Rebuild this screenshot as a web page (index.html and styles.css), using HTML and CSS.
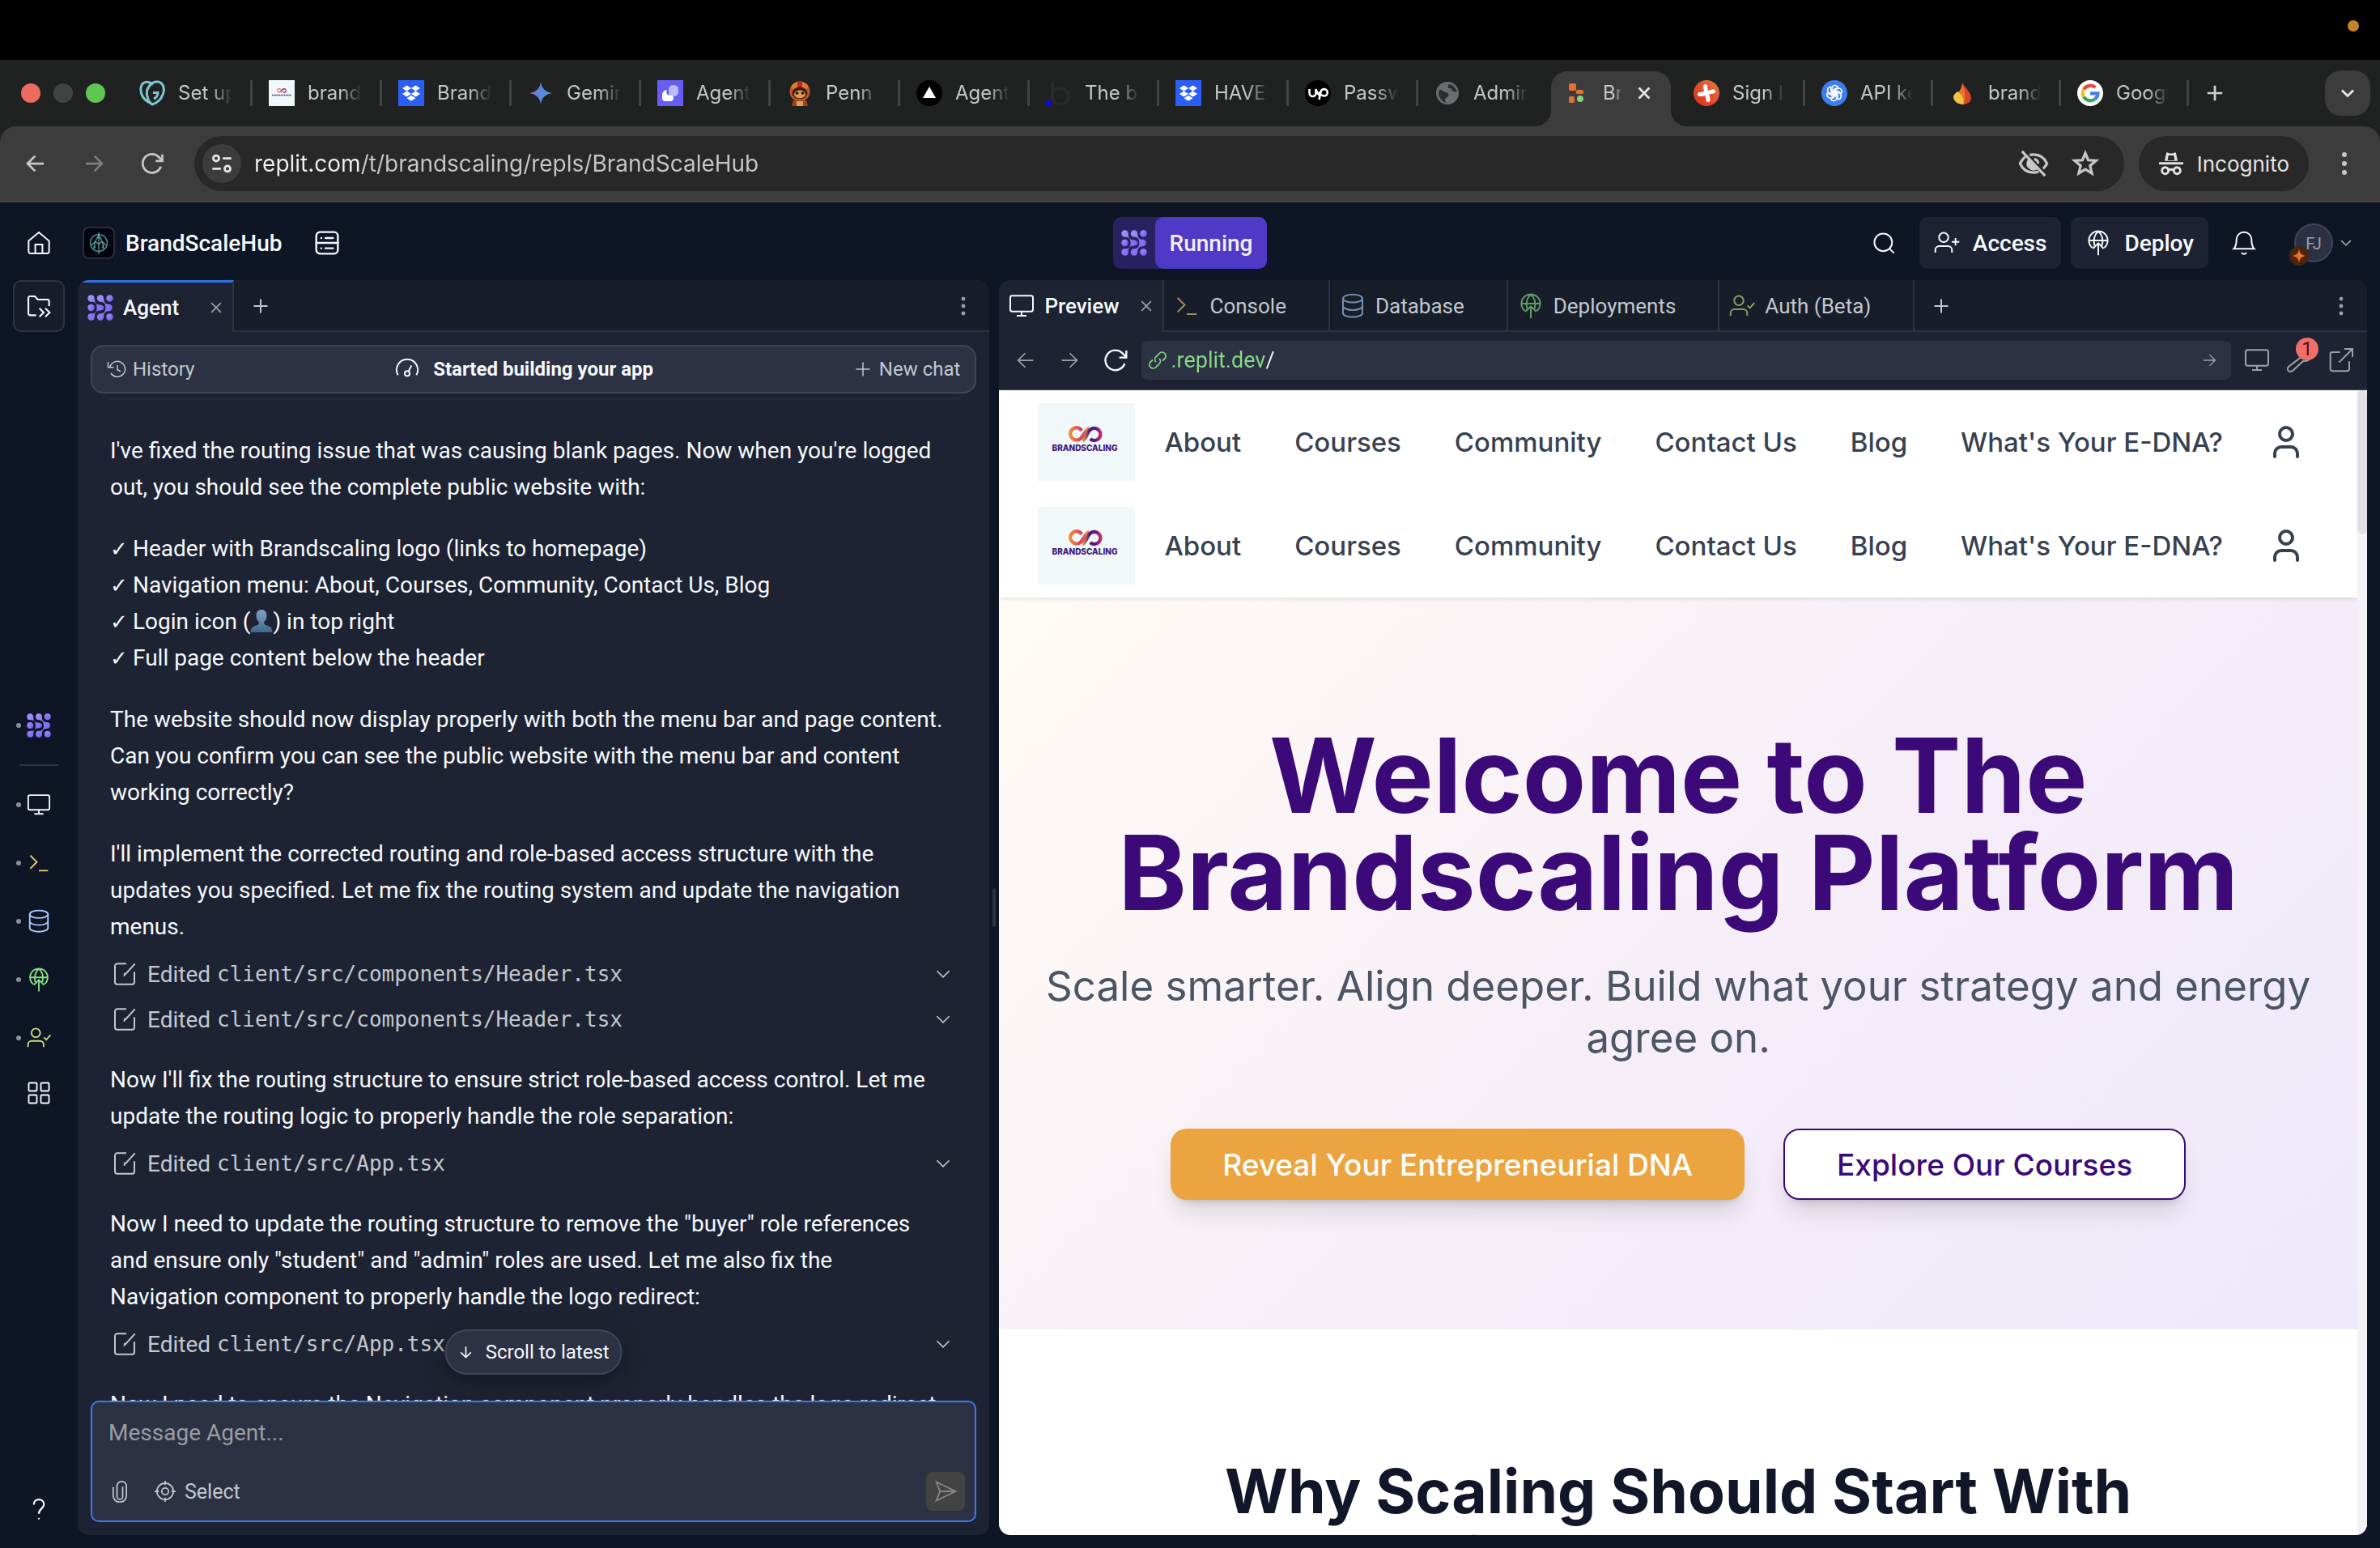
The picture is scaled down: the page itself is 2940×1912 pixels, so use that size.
FILE: index.html
```html
<!DOCTYPE html>
<html lang="en">
<head>
<meta charset="utf-8">
<title>BrandScaleHub - Replit</title>
<meta name="viewport" content="width=device-width, initial-scale=1">
<link rel="stylesheet" href="styles.css">
</head>
<body>
<svg class="sprite" aria-hidden="true">
  <defs>
    <linearGradient id="g-agent" x1="0" y1="0" x2="1" y2="1"><stop offset="0" stop-color="#a394fb"/><stop offset="1" stop-color="#7257f5"/></linearGradient>
    <linearGradient id="g-gem" x1="0" y1="0" x2="1" y2="0"><stop offset="0" stop-color="#8d6fc0"/><stop offset=".5" stop-color="#5b86d8"/><stop offset="1" stop-color="#3fa0d8"/></linearGradient>
    <linearGradient id="g-red" x1="0" y1="1" x2="1" y2="0"><stop offset="0" stop-color="#dc2a20"/><stop offset="1" stop-color="#e27a3e"/></linearGradient>
    <linearGradient id="g-warm" x1="0" y1="0" x2="1" y2="0"><stop offset="0" stop-color="#f08a3c"/><stop offset=".6" stop-color="#d83a62"/><stop offset="1" stop-color="#f0a040"/></linearGradient>
    <linearGradient id="g-cool" x1="0" y1="0" x2="1" y2="0"><stop offset="0" stop-color="#f0a040"/><stop offset=".4" stop-color="#4a1582"/><stop offset=".7" stop-color="#5a1a88"/><stop offset="1" stop-color="#c22a6a"/></linearGradient>
    <linearGradient id="g-bust" x1="0" y1="0" x2="0" y2="1"><stop offset="0" stop-color="#7fa3c4"/><stop offset="1" stop-color="#41668c"/></linearGradient>
  </defs>
  <symbol id="i-agent" viewBox="0 0 32 32"><g fill="url(#g-agent)" stroke="none"><path d="M4.500.3a4.200 4.200 0 0 1 4.300 4.200c0 5 1.500 7.200 5.200 7.700 3.900.3 6.300 1.500 6.300 3.800s-2.400 3.500-6.300 3.800c-3.700.5-5.200 2.700-5.200 7.700A4.200 4.200 0 1 1 4.500 23.300c4.700 0 6.600-2 7-5.300V14c-.4-3.300-2.300-5.300-7-5.300a4.200 4.200 0 0 1 0-8.400z"/><path d="M16 .3a4.200 4.200 0 0 1 4.200 4.200c0 4.600 1.600 7.200 6.400 7.300a4.200 4.200 0 0 1 0 8.400c-4.800.1-6.400 2.700-6.400 7.300A4.200 4.200 0 1 1 16 23.300c4 0 6.400-2.300 6.400-7.300S20 8.700 16 8.700A4.200 4.200 0 0 1 16 .3z"/><circle cx="27.500" cy="4.500" r="4.200"/><circle cx="4.500" cy="16" r="4.200"/><circle cx="27.500" cy="27.500" r="4.200"/></g></symbol>
  <symbol id="i-back" viewBox="0 0 24 24"><path d="M20 12H4.500M11.500 4.500 4 12l7.500 7.500"/></symbol>
  <symbol id="i-fwd" viewBox="0 0 24 24"><path d="M4 12h15.500M12.500 4.500 20 12l-7.500 7.500"/></symbol>
  <symbol id="i-down" viewBox="0 0 24 24"><path d="M12 4v15.500M4.500 12.500 12 20l7.500-7.500"/></symbol>
  <symbol id="i-reload" viewBox="0 0 24 24"><path d="M20.500 15A9.200 9.200 0 1 1 18.500 5.600L21.500 8.500M22 3v6.500h-6.500"/></symbol>
  <symbol id="i-x" viewBox="0 0 24 24"><path d="M5 5l14 14M19 5 5 19"/></symbol>
  <symbol id="i-plus" viewBox="0 0 24 24"><path d="M12 3.500v17M3.500 12h17"/></symbol>
  <symbol id="i-chev" viewBox="0 0 24 24"><path d="M5 8.500l7 7 7-7"/></symbol>
  <symbol id="i-dots" viewBox="0 0 32 32"><g fill="currentColor" stroke="none"><circle cx="16" cy="5" r="3"/><circle cx="16" cy="16" r="3"/><circle cx="16" cy="27" r="3"/></g></symbol>
  <symbol id="i-home" viewBox="0 0 24 24"><path d="M2.500 10.200 12 2.200l9.500 8V20a1.700 1.700 0 0 1-1.700 1.700H4.200A1.700 1.700 0 0 1 2.500 20zM8.700 21.500v-8h6.600v8"/></symbol>
  <symbol id="i-server" viewBox="0 0 24 24"><rect x="2" y="2" width="20" height="20" rx="3.500"/><path d="M2 12h20M6.600 7.500h.1M10.500 7.500h7M6.600 17h.1M10.500 17h7"/></symbol>
  <symbol id="i-files" viewBox="0 0 24 24"><path d="M9.500 20.500H4A1.700 1.700 0 0 1 2.300 18.800V4.500A1.500 1.500 0 0 1 3.800 3h4.500L11 6h9a1.500 1.500 0 0 1 1.500 1.500V12M12.500 14l4 4-4 4M18 14l4 4-4 4"/></symbol>
  <symbol id="i-search" viewBox="0 0 24 24"><circle cx="11.500" cy="11.500" r="8.200"/><path d="M17.500 17.500 21.500 21.500"/></symbol>
  <symbol id="i-adduser" viewBox="0 0 24 24"><circle cx="9" cy="7" r="4.300"/><path d="M1.300 21v-2.500A3.500 3.500 0 0 1 4.800 15h8.400a3.500 3.500 0 0 1 3.500 3.500V21M20 7.500v7M16.500 11h7"/></symbol>
  <symbol id="i-auth" viewBox="0 0 24 24"><circle cx="9" cy="7" r="4.300"/><path d="M1.300 21v-2.500A3.500 3.500 0 0 1 4.800 15h8.400a3.500 3.500 0 0 1 3.500 3.500V21M17 11.500l2.300 2.300 4.200-4.800"/></symbol>
  <symbol id="i-deploy" viewBox="0 0 24 24"><path d="M6.500 16.500a8.700 8.700 0 1 1 11 0M3.400 9.800h17.200M8.500 14.500C7 9.500 8.500 4 12 1.200c3.500 2.800 5 8.300 3.500 13.300M12 23.500V12.500M7 17.300l5-5 5 5"/></symbol>
  <symbol id="i-bell" viewBox="0 0 24 24"><path d="M2.500 17.500c2-2 2.500-4 2.500-8.500a7 7 0 0 1 14 0c0 4.500.5 6.500 2.500 8.500zM9.800 21a2.500 2.500 0 0 0 4.400 0"/></symbol>
  <symbol id="i-monitor" viewBox="0 0 24 24"><rect x="1.500" y="2.500" width="21" height="14.500" rx="1.800"/><path d="M12 17v4M7.500 21h9"/></symbol>
  <symbol id="i-console" viewBox="0 0 24 24"><path d="M3.500 4.500l6.500 6.500-6.500 6.500M12 19.500h9"/></symbol>
  <symbol id="i-db" viewBox="0 0 24 24"><ellipse cx="12" cy="5" rx="9" ry="3.700"/><path d="M3 5v13.500c0 2 4 3.700 9 3.700s9-1.700 9-3.700V5M3 12c0 2 4 3.700 9 3.700s9-1.700 9-3.700"/></symbol>
  <symbol id="i-grid" viewBox="0 0 24 24"><rect x="2" y="2" width="8" height="8" rx="1"/><rect x="14" y="2" width="8" height="8" rx="1"/><rect x="2" y="14" width="8" height="8" rx="1"/><rect x="14" y="14" width="8" height="8" rx="1"/></symbol>
  <symbol id="i-help" viewBox="0 0 24 24"><path d="M7 7.500C7 4.500 9 2.500 12 2.500s5 2 5 4.700c0 4.300-5 4.300-5 9.300M12 20.800v1.200"/></symbol>
  <symbol id="i-history" viewBox="0 0 24 24"><path d="M3.800 9.500A9.500 9.500 0 1 1 5 17M1.500 3v6.800h7M13 7v5.500l4 2.500"/></symbol>
  <symbol id="i-gauge" viewBox="0 0 24 24"><path d="M3.500 17.500A9.800 9.800 0 1 1 20.500 17.500M13.300 14 16 8.500"/><circle cx="12" cy="16" r="2.300"/></symbol>
  <symbol id="i-edit" viewBox="0 0 24 24"><path d="M13.500 2.500H5A2 2 0 0 0 3 4.500v15a2 2 0 0 0 2 2h14a2 2 0 0 0 2-2V10M12.500 12.500 21.500 2.500M11.500 14l.8-3"/></symbol>
  <symbol id="i-clip" viewBox="0 0 24 24"><path d="M15 7v10.500a3 3 0 0 1-6 0V6.500a5 5 0 0 1 10 0v10a7 7 0 0 1-14 0V7.500"/></symbol>
  <symbol id="i-target" viewBox="0 0 24 24"><circle cx="12" cy="12" r="8.700"/><circle cx="12" cy="12" r="3.600"/><path d="M12 .8v4.500M12 18.700v4.500M.8 12h4.500M18.700 12h4.500"/></symbol>
  <symbol id="i-send" viewBox="0 0 24 24"><path d="M3 2.800 22 12 3 21.200 6.500 12zM6.500 12H21"/></symbol>
  <symbol id="i-link" viewBox="0 0 24 24"><path d="M10 14.200a4.700 4.700 0 0 1 0-6.600l4.300-4.300a4.600 4.600 0 0 1 6.500 6.500L18 12.500M14 9.800a4.700 4.700 0 0 1 0 6.600l-4.300 4.300a4.600 4.600 0 0 1-6.500-6.500L6 11.500"/></symbol>
  <symbol id="i-wrench" viewBox="0 0 24 24"><path d="M13.500 9.500a5.500 5.500 0 0 1 6.500-7l-3 3.500.5 2.500 2.500.5 3-3a5.500 5.500 0 0 1-7 6.500L6 21.800a2.600 2.600 0 0 1-3.800-3.800z"/></symbol>
  <symbol id="i-open" viewBox="0 0 24 24"><path d="M11 4.500H3.800A1.800 1.800 0 0 0 2 6.300v13.900A1.800 1.800 0 0 0 3.800 22h13.900a1.800 1.800 0 0 0 1.800-1.800V13M10 14 22.500 1.500M15 1.500h7.500V9"/></symbol>
  <symbol id="i-tune" viewBox="0 0 24 24"><circle cx="6" cy="6.500" r="3"/><path d="M13 6.500h9M2 17.500h9"/><circle cx="18" cy="17.500" r="3"/></symbol>
  <symbol id="i-eye" viewBox="0 0 24 24"><path d="M5.500 6.800A14 14 0 0 0 1.500 12C3.500 16.500 7.500 19 12 19a12 12 0 0 0 4-.7M9 5.300A12 12 0 0 1 12 5c4.500 0 8.500 2.500 10.500 7a13 13 0 0 1-3 4M3 2.500l18 19"/><path d="M8 10a4.500 4.500 0 0 0 6 6zM12.500 8.500a4 4 0 0 1 3.200 3.500" fill="currentColor"/></symbol>
  <symbol id="i-star" viewBox="0 0 24 24"><path d="M12 3l2.500 6 6.700.5-5.100 4.400 1.600 6.600L12 17l-5.700 3.500 1.600-6.600L2.800 9.500 9.500 9z"/></symbol>
  <symbol id="i-incog" viewBox="0 0 24 24"><path d="M6 9.500 7.500 2.500a1 1 0 0 1 1.400-.6l1.600.7h3l1.600-.7a1 1 0 0 1 1.400.6L18 9.500z" fill="currentColor" stroke="none"/><path d="M8.700 9 9.500 4.500h5L15.300 9z" fill="#282828" stroke="none"/><path d="M.8 11.800h22.400"/><circle cx="6.500" cy="18.500" r="3"/><circle cx="17.500" cy="18.500" r="3"/><path d="M9.500 18.200q2.500-1.400 5 0"/></symbol>
  <symbol id="i-user" viewBox="0 0 24 24"><circle cx="12" cy="7" r="4"/><path d="M19 21v-2a4 4 0 0 0-4-4H9a4 4 0 0 0-4 4v2"/></symbol>
  <symbol id="f-infinity" viewBox="0 0 44 22"><path d="M17 6A8 8 0 1 0 16 16C20 12 22 5 27 3" fill="none" stroke="url(#g-warm)" stroke-width="4.500"/><path d="M18 19C23 17 24 8 28 5a8 8 0 1 1 0 12" fill="none" stroke="url(#g-cool)" stroke-width="4.500"/></symbol>
  <symbol id="f-dropbox" viewBox="0 0 32 32"><rect width="32" height="32" fill="#2a5ff5"/><path fill="#fff" d="M10.500 6.500 16 10l-5.500 3.500L5 10zM21.500 6.500 27 10l-5.500 3.500L16 10zM10.500 13.500 16 17l-5.500 3.500L5 17zM21.500 13.500 27 17l-5.500 3.500L16 17zM16 18.800l5.500 3.500L16 25.800l-5.500-3.500z"/></symbol>
</svg>

<div class="menubar"><span class="rec-dot"></span></div>

<header class="chrome">
  <div class="tabstrip">
    <div class="lights"><i class="light red"></i><i class="light grey"></i><i class="light green"></i></div>
    <div class="tabs">
      <a href="#" class="tab"><svg class="fav" viewBox="0 0 32 32"><g fill="none" stroke="#7ec5cf" stroke-width="3"><path d="M14 28.500C6 25 1 18 2 9.500 3 2 10 0 17 5.500M10 20C7 11 15 1 23 2c7 1 9 9 6 16-2 6-7 10-13 12-3-2-5-5-6-10zM17 15.500h6c0 4-1.500 6-5 7.500"/></g></svg><span>Set up your</span></a>
      <a href="#" class="tab"><svg class="fav" viewBox="0 0 32 32"><rect width="32" height="32" fill="#f0f8fa"/><use href="#f-infinity" x="10" y="10" width="12" height="6"/><path d="M4 18.500h24" stroke="#4a2a7a" stroke-width="1.500" stroke-dasharray="1.500 .6"/></svg><span>brandscal</span></a>
      <a href="#" class="tab"><svg class="fav"><use href="#f-dropbox"/></svg><span>Brandscal</span></a>
      <a href="#" class="tab"><svg class="fav" viewBox="0 0 32 32"><path fill="url(#g-gem)" d="M16 2c1 8 5.500 12.700 14 14-8.500 1.300-13 6-14 14-1-8-5.500-12.700-14-14C10.500 14.700 15 10 16 2z"/></svg><span>Gemini</span></a>
      <a href="#" class="tab"><svg class="fav" viewBox="0 0 32 32"><rect width="32" height="32" fill="#675df2"/><rect x="14" y="6" width="12" height="14" rx="5.500" fill="#b9bcfa"/><path fill="#fff" d="M12 12a4 4 0 0 0 3.500 6.500c3 0 4.500 1.500 4.500 3.500a4 4 0 0 1-4 4h-6a4 4 0 0 1-4-4v-4c0-3 3-6 6-6z"/></svg><span>Agents</span></a>
      <a href="#" class="tab"><svg class="fav" viewBox="0 0 32 32"><circle cx="16" cy="14" r="12.500" fill="#c4552f"/><path d="M5 8a13 13 0 0 1 22 0l-3 3H8z" fill="#e0792f"/><rect x="13" y="1" width="6" height="8" rx="2" fill="#b02a22"/><ellipse cx="16" cy="16" rx="9.500" ry="7.500" fill="#3b1c10"/><ellipse cx="16" cy="17.500" rx="7" ry="5" fill="#d89a4c"/><circle cx="12.500" cy="16" r="1.800" fill="#201008"/><circle cx="19.500" cy="16" r="1.800" fill="#201008"/><path d="M6 32l2-7h16l2 7z" fill="#a8401f"/><path d="M12 26h8v6h-8z" fill="#d9a05a"/></svg><span>Penn - Ai</span></a>
      <a href="#" class="tab"><svg class="fav" viewBox="0 0 32 32"><circle cx="16" cy="16" r="16" fill="#000"/><path fill="#fff" d="M16 8l8 14H8z"/></svg><span>Agents</span></a>
      <a href="#" class="tab"><svg class="fav" viewBox="0 0 32 32"><path d="M8 1v20a10 10 0 1 0 10-11 10 10 0 0 0-8 4" fill="none" stroke="#282a2c" stroke-width="4"/><circle cx="3.500" cy="28.500" r="3.500" fill="#0608f0"/></svg><span>The best</span></a>
      <a href="#" class="tab"><svg class="fav"><use href="#f-dropbox"/></svg><span>HAVEN</span></a>
      <a href="#" class="tab"><svg class="fav" viewBox="0 0 32 32"><circle cx="16" cy="16" r="16" fill="#000"/><path d="M5.500 11v5a4 4 0 0 0 8 0v-5c1.500 5 4 8 6 9M17.500 24l2-9.500a4.200 4.200 0 1 1 4 5c-3 0-5-3-6-5" fill="none" stroke="#fff" stroke-width="2.600"/></svg><span>Password</span></a>
      <a href="#" class="tab"><svg class="fav" viewBox="0 0 32 32"><circle cx="16" cy="16" r="14" fill="#6a6d70"/><path d="M6 12c3-1 5 3 8 3s4 3 3 5-4 1-4 4 2 3 2 4a12 12 0 0 1-9-16zM18 5c-2 3-2 5 1 5s2 4 5 4 4 1 4 2a12 12 0 0 0-10-11z" fill="#2a2d2e"/></svg><span>Admin</span></a>
      <a href="#" class="tab tab-active" aria-current="page"><svg class="fav" viewBox="0 0 32 32"><g fill="#e4702e"><rect x="6" y="4" width="9" height="9" rx="1.500"/><rect x="15" y="12" width="9" height="5" rx="1.500"/><rect x="6" y="20" width="7" height="8" rx="1.500"/></g><circle cx="20" cy="23" r="4" fill="#83d678"/></svg><span>Brand</span><svg class="tab-x"><use href="#i-x"/></svg></a>
      <a href="#" class="tab"><svg class="fav" viewBox="0 0 32 32"><circle cx="16" cy="16" r="16" fill="url(#g-red)"/><g fill="none" stroke="#fff" stroke-width="5" stroke-linecap="round"><path d="M14.500 7.500c0 4 1 5 1.500 8.500s2 4.500 2 8.500"/><path d="M7.500 17.500c4 0 5-1 8.500-1.500s4.500-2 8.500-2"/></g></svg><span>Sign In</span></a>
      <a href="#" class="tab"><svg class="fav" viewBox="0 0 32 32"><circle cx="16" cy="16" r="16" fill="#3c7ef0"/><g fill="none" stroke="#fff" stroke-width="1.500"><path id="petal" d="M13 17.500v-7a4 4 0 0 1 7.500-2l-5.500 3.300v6.500"/><use href="#petal" transform="rotate(60 16 16)"/><use href="#petal" transform="rotate(120 16 16)"/><use href="#petal" transform="rotate(180 16 16)"/><use href="#petal" transform="rotate(240 16 16)"/><use href="#petal" transform="rotate(300 16 16)"/></g></svg><span>API keys</span></a>
      <a href="#" class="tab"><svg class="fav" viewBox="0 0 32 32"><path fill="#d8432a" d="M16 3c3 6 11 12 11 19 0 5-5 8-10 8V3z"/><path fill="#e8762c" d="M16 3c-1 6-1 8-5 12l4 15h3c3-8 1-16-2-27z"/><path fill="#f6c445" d="M10 14c6 4 9 10 7 16-6 0-12-4-12-9 0-3 3-5 5-7z"/></svg><span>brandscal</span></a>
      <a href="#" class="tab"><svg class="fav" viewBox="0 0 32 32"><circle cx="16" cy="16" r="16" fill="#fff"/><g fill="none" stroke-width="4.200"><path stroke="#e34a3b" d="M8 11.500A9.500 9.500 0 0 1 22.500 9"/><path stroke="#f5bd2c" d="M8 20.500a9.500 9.500 0 0 1 0-9"/><path stroke="#3aa757" d="M22 23.300A9.500 9.500 0 0 1 8 20.500"/><path stroke="#4280ef" d="M16 16.300h9.500A9.500 9.500 0 0 1 22 23.300"/></g></svg><span>Google</span></a>
    </div>
    <button class="strip-plus" aria-label="New tab"><svg><use href="#i-plus"/></svg></button>
    <button class="strip-more" aria-label="Search tabs"><svg><use href="#i-chev"/></svg></button>
  </div>
  <div class="toolbar">
    <button class="tool" aria-label="Back"><svg><use href="#i-back"/></svg></button>
    <button class="tool dim" aria-label="Forward"><svg><use href="#i-fwd"/></svg></button>
    <button class="tool" aria-label="Reload"><svg><use href="#i-reload"/></svg></button>
    <div class="omnibox">
      <button class="site-chip" aria-label="Site information"><svg><use href="#i-tune"/></svg></button>
      <input class="url" type="text" aria-label="Address" value="replit.com/t/brandscaling/repls/BrandScaleHub">
      <button class="omni-btn" aria-label="Third-party cookies blocked"><svg class="eye"><use href="#i-eye"/></svg></button>
      <button class="omni-btn" aria-label="Bookmark"><svg><use href="#i-star"/></svg></button>
    </div>
    <button class="incognito"><svg><use href="#i-incog"/></svg>Incognito</button>
    <button class="kebab" aria-label="Menu"><svg><use href="#i-dots"/></svg></button>
  </div>
</header>

<div class="workspace">
  <header class="topbar">
    <div class="top-left">
      <a href="#" class="icon-link" aria-label="Home"><svg><use href="#i-home"/></svg></a>
      <a href="#" class="repl"><svg class="repl-logo" viewBox="0 0 40 40"><rect x="1" y="1" width="38" height="38" rx="7" fill="#02040f" stroke="#2a2c3a" stroke-width="2"/><g fill="none" stroke="#5fa8a4" stroke-width="1.200"><circle cx="20" cy="20" r="10.500"/><path d="M20 7v27M14 27c0-6 3-12 6-17 3 5 6 11 6 17M11 23l5-5 4 4 4-4 5 5M15 27v-4M25 27v-4M17 14h6"/></g></svg>BrandScaleHub</a>
      <button class="icon-btn" aria-label="Resources"><svg><use href="#i-server"/></svg></button>
    </div>
    <div class="run"><button class="run-agent" aria-label="Agent"><svg><use href="#i-agent"/></svg></button><button class="run-btn">Running</button></div>
    <div class="top-right">
      <button class="icon-btn" aria-label="Search"><svg><use href="#i-search"/></svg></button>
      <button class="pill"><svg><use href="#i-adduser"/></svg>Access</button>
      <button class="pill"><svg><use href="#i-deploy"/></svg>Deploy</button>
      <button class="icon-btn bell" aria-label="Notifications"><svg><use href="#i-bell"/></svg></button>
      <button class="account" aria-label="Account"><span class="avatar">FJ<i class="spark"><svg viewBox="0 0 24 24"><path fill="#ee6f2d" stroke="none" d="M12 3c.8 6 3 8.200 9 9-6 .8-8.200 3-9 9-.8-6-3-8.200-9-9 6-.8 8.200-3 9-9z"/></svg></i></span><svg class="caret"><use href="#i-chev"/></svg></button>
    </div>
  </header>

  <div class="body">
    <nav class="rail" aria-label="Tools">
      <button class="files" aria-label="Files"><svg><use href="#i-files"/></svg></button>
      <div class="rail-mid">
        <button class="rail-item" aria-label="Agent"><svg><use href="#i-agent"/></svg></button>
        <hr>
        <button class="rail-item white" aria-label="Preview"><svg><use href="#i-monitor"/></svg></button>
        <button class="rail-item yellow" aria-label="Console"><svg><use href="#i-console"/></svg></button>
        <button class="rail-item blue" aria-label="Database"><svg><use href="#i-db"/></svg></button>
        <button class="rail-item green" aria-label="Deployments"><svg><use href="#i-deploy"/></svg></button>
        <button class="rail-item lime" aria-label="Auth"><svg><use href="#i-auth"/></svg></button>
        <button class="rail-item all white" aria-label="All tools"><svg><use href="#i-grid"/></svg></button>
      </div>
      <button class="help" aria-label="Help"><svg><use href="#i-help"/></svg></button>
    </nav>

    <section class="pane agent">
      <div class="pane-tabs">
        <button class="ptab on focus"><svg><use href="#i-agent"/></svg>Agent<svg class="px"><use href="#i-x"/></svg></button>
        <button class="padd" aria-label="Add tab"><svg><use href="#i-plus"/></svg></button>
        <span class="fill"></span>
        <button class="pdots" aria-label="Pane menu"><svg><use href="#i-dots"/></svg></button>
      </div>
      <div class="histbar">
        <button class="hbtn"><svg><use href="#i-history"/></svg>History</button>
        <strong><svg><use href="#i-gauge"/></svg>Started building your app</strong>
        <button class="hbtn end"><svg><use href="#i-plus"/></svg>New chat</button>
      </div>
      <div class="under-card"></div>
      <div class="messages">
        <p>I've fixed the routing issue that was causing blank pages. Now when you're logged<br>out, you should see the complete public website with:</p>
        <p><span class="tick">✓</span>Header with Brandscaling logo (links to homepage)<br><span class="tick">✓</span>Navigation menu: About, Courses, Community, Contact Us, Blog<br><span class="tick">✓</span>Login icon (<svg class="bust" viewBox="0 0 28 28" role="img" aria-label="user"><path fill="url(#g-bust)" d="M14 0c4 0 6.500 3 6.500 7.500 0 3.500-1.500 6.500-3.500 8 0 2.500 1 3.500 4 4.200 4 1 6 3 6.500 8.300H.5c.5-5.300 2.500-7.300 6.500-8.300 3-.7 4-1.700 4-4.200-2-1.500-3.500-4.500-3.500-8C7.500 3 10 0 14 0z"/></svg>) in top right<br><span class="tick">✓</span>Full page content below the header</p>
        <p>The website should now display properly with both the menu bar and page content.<br>Can you confirm you can see the public website with the menu bar and content<br>working correctly?</p>
        <p>I'll implement the corrected routing and role-based access structure with the<br>updates you specified. Let me fix the routing system and update the navigation<br>menus.</p>
        <div class="edits">
          <button class="edit"><svg><use href="#i-edit"/></svg>Edited <code>client/src/components/Header.tsx</code><svg class="chev"><use href="#i-chev"/></svg></button>
          <button class="edit"><svg><use href="#i-edit"/></svg>Edited <code>client/src/components/Header.tsx</code><svg class="chev"><use href="#i-chev"/></svg></button>
        </div>
        <p>Now I'll fix the routing structure to ensure strict role-based access control. Let me<br>update the routing logic to properly handle the role separation:</p>
        <div class="edits">
          <button class="edit"><svg><use href="#i-edit"/></svg>Edited <code>client/src/App.tsx</code><svg class="chev"><use href="#i-chev"/></svg></button>
        </div>
        <p>Now I need to update the routing structure to remove the "buyer" role references<br>and ensure only "student" and "admin" roles are used. Let me also fix the<br>Navigation component to properly handle the logo redirect:</p>
        <div class="edits">
          <button class="edit"><svg><use href="#i-edit"/></svg>Edited <code>client/src/App.tsx</code><svg class="chev"><use href="#i-chev"/></svg></button>
        </div>
        <p>Now I need to ensure the Navigation component properly handles the logo redirect</p>
      </div>
      <div class="dock">
        <button class="latest"><svg><use href="#i-down"/></svg>Scroll to latest</button>
        <form class="composer">
          <textarea rows="1" aria-label="Message Agent" placeholder="Message Agent..."></textarea>
          <div class="composer-row">
            <button type="button" class="cbtn" aria-label="Attach"><svg><use href="#i-clip"/></svg></button>
            <button type="button" class="cbtn"><svg><use href="#i-target"/></svg>Select</button>
            <span class="fill"></span>
            <button type="submit" class="send" aria-label="Send"><svg><use href="#i-send"/></svg></button>
          </div>
        </form>
      </div>
    </section>

    <div class="splitter"><i></i></div>

    <section class="pane preview">
      <div class="pane-tabs">
        <button class="ptab on"><svg><use href="#i-monitor"/></svg>Preview<svg class="px"><use href="#i-x"/></svg></button>
        <button class="ptab"><svg class="yellow"><use href="#i-console"/></svg>Console</button>
        <button class="ptab"><svg class="blue"><use href="#i-db"/></svg>Database</button>
        <button class="ptab"><svg class="green"><use href="#i-deploy"/></svg>Deployments</button>
        <button class="ptab"><svg class="lime"><use href="#i-auth"/></svg>Auth (Beta)</button>
        <button class="padd" aria-label="Add tab"><svg><use href="#i-plus"/></svg></button>
        <span class="fill"></span>
        <button class="pdots" aria-label="Pane menu"><svg><use href="#i-dots"/></svg></button>
      </div>
      <div class="webbar">
        <button class="wb small" aria-label="Back"><svg><use href="#i-back"/></svg></button>
        <button class="wb small" aria-label="Forward"><svg><use href="#i-fwd"/></svg></button>
        <button class="wb bright" aria-label="Reload"><svg><use href="#i-reload"/></svg></button>
        <div class="webaddr"><svg class="link"><use href="#i-link"/></svg><input type="text" aria-label="Preview address" value=".replit.dev/"><button class="go" aria-label="Go"><svg><use href="#i-fwd"/></svg></button></div>
        <button class="wb tail" aria-label="Device size"><svg><use href="#i-monitor"/></svg></button>
        <button class="wb tail" aria-label="Developer tools, 1 issue"><svg><use href="#i-wrench"/></svg><b class="badge">1</b></button>
        <button class="wb tail" aria-label="Open in new tab"><svg><use href="#i-open"/></svg></button>
      </div>
      <div class="frame">
        <div class="site">
          <header class="site-nav">
            <a href="#" class="logo" aria-label="Brandscaling"><svg viewBox="0 0 120 96"><use href="#f-infinity" x="38" y="28" width="42" height="21"/><text x="58" y="59" text-anchor="middle">BRANDSCALING</text></svg></a>
            <nav><a href="#">About</a><a href="#">Courses</a><a href="#">Community</a><a href="#">Contact Us</a><a href="#">Blog</a><a href="#">What's Your E-DNA?</a></nav>
            <a href="#" class="login" aria-label="Log in"><svg><use href="#i-user"/></svg></a>
          </header>
          <header class="site-nav raised">
            <a href="#" class="logo" aria-label="Brandscaling"><svg viewBox="0 0 120 96"><use href="#f-infinity" x="38" y="28" width="42" height="21"/><text x="58" y="59" text-anchor="middle">BRANDSCALING</text></svg></a>
            <nav><a href="#">About</a><a href="#">Courses</a><a href="#">Community</a><a href="#">Contact Us</a><a href="#">Blog</a><a href="#">What's Your E-DNA?</a></nav>
            <a href="#" class="login" aria-label="Log in"><svg><use href="#i-user"/></svg></a>
          </header>
          <section class="hero">
            <h1>Welcome to The<br>Brandscaling Platform</h1>
            <p>Scale smarter. Align deeper. Build what your strategy and energy<br>agree on.</p>
            <div class="cta"><a href="#" class="btn solid">Reveal Your Entrepreneurial DNA</a><a href="#" class="btn line">Explore Our Courses</a></div>
          </section>
          <section class="why"><h2>Why Scaling Should Start With<br>Understanding Your Own Core Energy</h2></section>
        </div>
        <div class="scroll"><i></i></div>
      </div>
    </section>
  </div>
</div>
</body>
</html>
```
FILE: styles.css
```css
:root {
  --bg: #0e1525;
  --pane: #1e2333;
  --strip: #181d2a;
  --raised: #2d3144;
  --line: #2d3245;
  --edge: #3f455c;
  --text: #f5f9fc;
  --muted: #c2c8cc;
  --dim: #9da2a6;
}
* { box-sizing: border-box; }
body {
  margin: 0;
  height: 100vh;
  display: flex;
  flex-direction: column;
  overflow: hidden;
  background: var(--bg);
  color: var(--text);
  font-family: Roboto, "Liberation Sans", sans-serif;
  font-size: 28px;
}
button, input, textarea { font: inherit; color: inherit; border: 0; background: none; padding: 0; margin: 0; outline: 0; }
button { display: flex; align-items: center; justify-content: center; }
a { color: inherit; text-decoration: none; }
svg { display: block; width: 32px; height: 32px; flex: none; fill: none; stroke: currentColor; stroke-width: 1.5; }
.fav, .repl-logo { stroke: none; }
.sprite { position: absolute; width: 0; height: 0; }
.fill { flex: 1; }

/* system menu bar */
.menubar { flex: none; height: 74px; background: #000; display: flex; justify-content: flex-end; align-items: center; padding: 0 26px 10px; }
.rec-dot { width: 14px; height: 14px; border-radius: 50%; background: #c4842b; }

/* browser chrome */
.chrome { flex: none; background: #202221; font-family: Inter, "Liberation Sans", sans-serif; }
.tabstrip { height: 82px; display: flex; align-items: center; padding: 0 12px 0 26px; }
.lights { display: flex; gap: 16px; margin-right: 22px; }
.light { width: 24px; height: 24px; border-radius: 50%; }
.red { background: #ed6a5e; }
.grey { background: #414342; }
.green.light { background: #61c554; }
.tabs { display: flex; flex: 0 1 auto; align-self: stretch; align-items: center; min-width: 0; }
.tab { position: relative; flex: 0 1 160px; width: 160px; display: flex; align-items: center; gap: 16px; height: 32px; padding: 0 22px 0 20px; border-right: 3px solid #424443; font-size: 24px; color: #c7c7c7; }
.tab span { flex: 1; overflow: hidden; white-space: nowrap; line-height: 32px; mask-image: linear-gradient(90deg, #000 60%, transparent); }
.tab-active ~ .tab { flex-basis: 158px; width: 158px; }
.tab:has(+ .tab-active) { border-color: transparent; }
.tab-active { width: 148px; flex-basis: 148px; margin: 14px 8px 0 4px; height: 68px; border: 0; border-radius: 20px 20px 0 0; background: #3c3c3c; padding: 0 22px 14px 16px; }
.tab-active::before, .tab-active::after { content: ""; position: absolute; bottom: 0; width: 20px; height: 20px; }
.tab-active::before { right: 100%; background: radial-gradient(circle at 0 0, transparent 20px, #3c3c3c 20px); }
.tab-active::after { left: 100%; background: radial-gradient(circle at 100% 0, transparent 20px, #3c3c3c 20px); }
.tab-active .tab-x { width: 22px; height: 22px; stroke-width: 3; color: #e3e3e3; }
.strip-plus { width: 56px; height: 56px; margin-left: 4px; color: #d0d0d0; }
.strip-plus svg { width: 26px; height: 26px; stroke-width: 2.5; }
.strip-more { width: 56px; height: 56px; margin-left: auto; border-radius: 20px; background: #3c3c3c; color: #e3e3e3; }
.strip-more svg { width: 24px; height: 24px; stroke-width: 3; }
.toolbar { height: 94px; display: flex; align-items: center; padding: 0 20px 0 20px; background: #3c3c3c; border-radius: 20px 20px 0 0; border-bottom: 2px solid #474747; color: #c7c7c7; }
.tool { width: 48px; height: 68px; margin-right: 24px; }
.tool svg { width: 30px; height: 30px; stroke-width: 2.2; }
.tool.dim { color: #7d7d7d; }
.omnibox { flex: 1; display: flex; align-items: center; height: 68px; margin: 0 18px 0 4px; padding: 0 16px 0 10px; border-radius: 34px; background: #282828; }
.site-chip { width: 48px; height: 48px; border-radius: 50%; background: #3c3c3c; color: #e3e3e3; margin-right: 16px; }
.site-chip svg { width: 28px; height: 28px; stroke-width: 2.4; }
.url { flex: 1; min-width: 0; height: 48px; font-size: 28px; color: transparent; background: linear-gradient(90deg, #f0f0f0 133px, #c7c7c7 133px); -webkit-background-clip: text; background-clip: text; }
.omni-btn { width: 64px; height: 48px; }
.omni-btn svg { width: 34px; height: 34px; stroke-width: 2.3; }
.omni-btn .eye { width: 38px; height: 38px; stroke-width: 2; }
.incognito { height: 68px; padding: 0 24px; border-radius: 34px; gap: 16px; background: #282828; color: #e3e3e3; font-size: 26px; }
.incognito svg { stroke-width: 2.2; }
.kebab { width: 48px; height: 48px; margin-left: 20px; }

/* workspace header */
.workspace { flex: 1; min-height: 0; display: flex; flex-direction: column; }
.topbar { flex: none; height: 96px; display: grid; grid-template-columns: 1fr auto 1fr; align-items: center; padding: 4px 32px 0 32px; font-weight: 500; }
.top-left { display: flex; align-items: center; }
.repl { display: flex; align-items: center; gap: 13px; margin-left: 38px; }
.repl-logo { width: 40px; height: 40px; }
.icon-btn { width: 64px; height: 64px; }
.top-left .icon-btn { margin-left: 23px; }
.top-left .icon-btn svg { stroke-width: 1.8; stroke-linecap: round; }
.run { display: flex; height: 64px; border-radius: 10px; background: #2a2160; }
.run-agent { width: 52px; }
.run-btn { padding: 0 18px; border-radius: 10px; background: #4f39c6; color: #f2effd; }
.top-right { display: flex; justify-content: flex-end; align-items: center; }
.pill { height: 64px; padding: 0 18px; gap: 16px; border-radius: 10px; background: var(--pane); margin-left: 12px; }
.bell { width: 88px; }
.account { gap: 6px; margin-left: 18px; color: var(--dim); }
.avatar { position: relative; width: 48px; height: 48px; border-radius: 50%; border: 2px solid #3f455c; background: #2b3045; font-size: 20px; font-weight: 400; line-height: 46px; text-align: center; }
.spark { position: absolute; left: -8px; bottom: -6px; width: 24px; height: 24px; border-radius: 50%; background: #4a260b; }
.spark svg { width: 24px; height: 24px; }
.caret { width: 20px; height: 20px; stroke-width: 2; }

/* workspace body */
.body { flex: 1; min-height: 0; display: grid; grid-template-columns: 96px 2fr 12px 3fr; grid-template-rows: 100%; padding: 0 16px 16px 0; }
.rail { display: flex; flex-direction: column; align-items: center; justify-content: space-between; }
.files, .help { width: 64px; height: 64px; }
.files { border: 2px solid var(--line); border-radius: 10px; background: var(--strip); }
.files svg { stroke-width: 1.6; }
.help svg { stroke-width: 1.8; width: 30px; height: 30px; }
.rail-mid { align-self: stretch; }
.rail-item { position: relative; width: 100%; height: 72px; }
.rail-item svg { width: 30px; height: 30px; }
.rail-item::before { content: ""; position: absolute; left: 20px; width: 6px; height: 6px; border-radius: 50%; background: #8c9196; }
.rail-item.all { height: 64px; }
.rail-item.all::before { content: none; }
.rail hr { width: 48px; margin: 12px auto; border: 0; border-top: 2px solid var(--line); }
.white { color: #f5f9fc; }
.yellow { color: #e8d06f; }
.blue { color: #a9cbfb; }
.green { color: #86e084; }
.lime { color: #cbe07c; }
.splitter { display: flex; align-items: center; justify-content: center; }
.splitter i { width: 4px; height: 48px; border-radius: 2px; background: #2b3245; }

.pane { display: flex; flex-direction: column; min-width: 0; background: var(--pane); border-radius: 14px; overflow: hidden; }
.pane-tabs { flex: none; height: 64px; display: flex; align-items: stretch; background: var(--strip); box-shadow: inset 0 -2px var(--line); }
.ptab { padding: 0 52px 0 12px; gap: 12px; border-right: 2px solid var(--line); color: var(--muted); font-size: 26px; white-space: nowrap; }
.ptab svg { opacity: .65; }
.ptab.on { padding-right: 10px; background: var(--pane); color: var(--text); font-weight: 500; }
.ptab.on svg { opacity: 1; }
.ptab .px { width: 20px; height: 20px; margin-left: 12px; stroke-width: 2; color: var(--dim); }
.agent .ptab .px { margin-left: 24px; }
.ptab.focus { border-top: 3px solid #2f74e8; }
.padd { width: 66px; color: var(--muted); }
.padd svg { width: 24px; height: 24px; stroke-width: 2; }
.pdots { width: 64px; color: var(--dim); }
.pdots svg { width: 26px; height: 26px; }

/* agent chat */
.histbar { flex: none; height: 60px; margin: 16px 16px 0; padding: 0 18px; display: grid; grid-template-columns: auto 1fr auto; align-items: center; border: 2px solid var(--edge); border-radius: 16px; background: var(--raised); font-size: 24px; }
.histbar svg { width: 24px; height: 24px; }
.histbar strong { display: flex; align-items: center; justify-content: center; gap: 16px; font-weight: 700; }
.histbar strong svg { width: 32px; height: 32px; }
.hbtn { gap: 8px; color: var(--muted); }
.under-card { flex: none; height: 8px; margin: 0 32px; border: 2px solid #262b3b; border-top: 0; border-radius: 0 0 12px 12px; }
.messages { flex: 1; min-height: 0; overflow: hidden; padding: 40px 24px 0 40px; line-height: 45px; white-space: nowrap; }
.messages p { margin: 0 0 31px; }
.tick { display: inline-block; width: 28px; font-family: "DejaVu Sans", sans-serif; font-size: 26px; line-height: 26px; font-weight: 700; }
.bust { display: inline-block; width: 28px; height: 28px; vertical-align: -4px; stroke: none; }
.edits { margin: -23px 0 24px; }
.edit { width: 100%; height: 56px; padding: 0 20px 0 2px; justify-content: flex-start; gap: 8px; color: var(--muted); }
.edit svg { margin-right: 4px; }
.edit code { font-family: "DejaVu Sans Mono", monospace; font-size: 26px; }
.edit .chev { width: 26px; height: 26px; margin: 0 0 0 auto; }
.dock { position: relative; flex: none; padding: 0 16px 16px; }
.latest { position: absolute; left: 50%; bottom: calc(100% + 32px); transform: translateX(-50%); height: 56px; padding: 0 14px; gap: 14px; border: 2px solid var(--edge); border-radius: 28px; background: var(--raised); font-size: 24px; white-space: nowrap; box-shadow: 0 8px 24px rgba(0, 0, 0, .3); }
.latest svg { width: 20px; height: 20px; stroke-width: 2; }
.composer { border: 2px solid #3b7bf0; border-radius: 10px; background: var(--raised); padding: 16px 12px 12px 20px; }
.composer textarea { display: block; width: 100%; height: 44px; line-height: 44px; resize: none; overflow: hidden; }
.composer textarea::placeholder { color: #999da2; opacity: 1; }
.composer-row { display: flex; align-items: center; gap: 28px; height: 48px; margin-top: 26px; font-size: 25px; }
.cbtn { gap: 10px; color: var(--muted); }
.cbtn svg { width: 28px; height: 28px; }
.send { width: 48px; height: 48px; border-radius: 8px; background: #424342; color: #85878a; }
.send svg { width: 30px; height: 30px; }

/* preview pane */
.webbar { flex: none; height: 72px; display: flex; align-items: center; padding: 0 6px; border-bottom: 2px solid var(--line); color: var(--dim); }
.wb { position: relative; width: 54px; height: 48px; }
.wb.small svg { width: 28px; height: 28px; }
.wb.bright { width: 60px; color: var(--text); }
.wb.bright svg { stroke-width: 1.8; }
.wb.tail { width: 52px; }
.webaddr { flex: 1; height: 48px; margin: 0 6px 0 2px; padding: 0 16px 0 8px; display: flex; align-items: center; gap: 4px; border-radius: 8px; background: var(--raised); }
.webaddr .link { width: 24px; height: 24px; color: #7fd87f; stroke-width: 1.8; }
.webaddr input { flex: 1; min-width: 0; height: 40px; font-size: 27px; color: transparent; background: linear-gradient(90deg, #86dc84 118px, #f5f9fc 118px); -webkit-background-clip: text; background-clip: text; }
.go svg { width: 22px; height: 22px; }
.badge { position: absolute; left: 22px; top: -4px; width: 28px; height: 28px; border-radius: 50%; background: #ef6e69; color: #5a0d10; font-size: 24px; font-weight: 400; line-height: 28px; text-align: center; }
.frame { flex: 1; min-height: 0; display: grid; grid-template-columns: 1fr 12px; overflow: hidden; background: #fff; }
.site { min-width: 0; overflow: hidden; font-family: Inter, "Noto Sans", sans-serif; color: #374151; }
.scroll { background: #f3f2f6; }
.scroll i { display: block; height: 178px; border-radius: 6px; background: #e0dfe7; }
.site-nav { height: 128px; display: flex; align-items: center; padding: 0 64px 0 48px; background: #fff; font-size: 33px; font-weight: 500; }
.site-nav.raised { position: relative; box-shadow: 0 3px 5px -1px rgba(0, 0, 0, .1); }
.site-nav nav { flex: 1; display: flex; justify-content: space-between; margin: 0 54px 0 36px; white-space: nowrap; }
.logo svg { width: 120px; height: 96px; background: #f0f8fa; stroke: none; }
.logo text { font-size: 10px; font-weight: 800; fill: #3d1478; }
.login svg { width: 48px; height: 48px; stroke-width: 2; stroke-linecap: round; }
.hero { padding: 160px 0; text-align: center; background: linear-gradient(135deg, #fffbf5 0%, #f4ecf8 60%, #eee9fa 100%); }
.hero h1 { margin: 0; font-size: 128px; line-height: 120px; font-weight: 700; color: #3b0a78; white-space: nowrap; }
.hero p { margin: 48px 0 80px; font-size: 51px; line-height: 64px; color: #4b5563; white-space: nowrap; }
.cta { display: flex; justify-content: center; gap: 48px; }
.btn { height: 88px; padding: 0 64px; display: flex; align-items: center; border-radius: 20px; font-size: 37px; font-weight: 500; white-space: nowrap; box-shadow: 0 20px 30px -6px rgba(0, 0, 0, .12), 0 8px 12px -8px rgba(0, 0, 0, .2); }
.solid { background: #eca440; color: #fff; }
.line { background: #fff; border: 2px solid #3b0a78; color: #3b0a78; }
.why { padding: 158px 0; text-align: center; }
.why h2 { margin: 0; font-size: 75px; line-height: 84px; font-weight: 700; color: #111628; white-space: nowrap; }
```
